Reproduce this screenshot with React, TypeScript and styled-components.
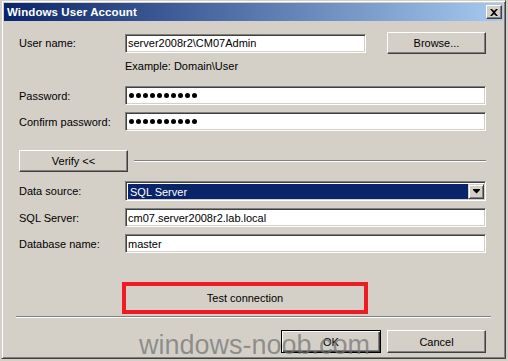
import React from 'react';
import styled, { createGlobalStyle } from 'styled-components';

const Global = createGlobalStyle`
  html, body { margin: 0; padding: 0; background: #d4d0c8; }
  body {
    width: 508px; height: 361px; overflow: hidden;
    font-family: "Liberation Sans", Arial, sans-serif;
    font-size: 11px; color: #000;
  }
`;

const Backdrop = styled.div`
  width: 508px; height: 361px; box-sizing: border-box;
  padding-left: 1px; background: #d4d0c8;
`;

const Window = styled.div`
  position: relative;
  width: 505px; height: 359px; box-sizing: border-box;
  border: 1px solid; border-color: #d4d0c8 #404040 #404040 #d4d0c8;
  box-shadow: inset 1px 1px #fff, inset -1px -1px #808080;
  padding: 2px;
  background: #d4d0c8;
  display: flex; flex-direction: column;
`;

const TitleBar = styled.div`
  height: 18px; flex: none;
  display: flex; align-items: center; justify-content: space-between;
  padding: 0 1px 0 3px;
  background: linear-gradient(to right, #0a246a, #a6caf0);
`;

const Title = styled.span`
  color: #fff; font-weight: bold; font-size: 11.5px; letter-spacing: 0.1px;
`;

const CloseButton = styled.div`
  width: 16px; height: 14px; box-sizing: border-box;
  background: #d4d0c8;
  border: 1px solid; border-color: #fff #404040 #404040 #fff;
  box-shadow: inset -1px -1px #808080;
  display: flex; align-items: center; justify-content: center;
`;

const Body = styled.div`
  flex: 1;
  display: flex; flex-direction: column;
  padding: 11px 17px 0 15px;
`;

const Row = styled.div<{ $h: number; $mt: number }>`
  display: flex; align-items: center;
  height: ${p => p.$h}px; margin-top: ${p => p.$mt}px; flex: none;
`;

const Label = styled.span`
  width: 106px; flex: none; white-space: nowrap;
`;

const TextBox = styled.div<{ $w?: number }>`
  box-sizing: border-box;
  width: ${p => (p.$w ? `${p.$w}px` : 'auto')};
  flex: ${p => (p.$w ? 'none' : '1')};
  height: 19px;
  border: 1px solid; border-color: #808080 #fff #fff #808080;
  box-shadow: inset 1px 1px #404040, inset -1px -1px #d4d0c8;
  background: #fff;
  padding-left: 2px;
  display: flex; align-items: center;
  white-space: nowrap; overflow: hidden;
`;

const Dots = styled.div`
  display: flex; gap: 2px; padding-left: 1px;
`;

const Dot = styled.span`
  width: 5px; height: 5px; border-radius: 50%; background: #000;
`;

const Button = styled.div<{ $w: number; $h: number; $default?: boolean }>`
  box-sizing: border-box; flex: none;
  width: ${p => p.$w}px; height: ${p => p.$h}px;
  background: #d4d0c8;
  border: 1px solid;
  border-color: ${p => (p.$default ? '#000' : '#fff #404040 #404040 #fff')};
  box-shadow: ${p =>
    p.$default
      ? 'inset 1px 1px #fff, inset -1px -1px #404040, inset -2px -2px #808080'
      : 'inset -1px -1px #808080'};
  display: flex; align-items: center; justify-content: center;
  white-space: nowrap;
`;

const Hint = styled.span`
  margin-left: 106px;
`;

const Etched = styled.div`
  flex: 1; height: 0;
  border-top: 1px solid #808080; border-bottom: 1px solid #fff;
`;

const VerifyLine = styled(Etched)`
  margin-left: 6px;
`;

const Combo = styled.div`
  box-sizing: border-box; flex: 1; height: 20px;
  border: 1px solid; border-color: #808080 #fff #fff #808080;
  box-shadow: inset 1px 1px #404040, inset -1px -1px #d4d0c8;
  background: #fff;
  padding: 2px 1px 1px 2px;
  display: flex;
`;

const Selected = styled.div`
  flex: 1; background: #0a246a; color: #fff;
  display: flex; align-items: center; padding-left: 2px;
`;

const DropButton = styled.div`
  width: 16px; box-sizing: border-box;
  background: #d4d0c8;
  border: 1px solid; border-color: #d4d0c8 #404040 #404040 #d4d0c8;
  box-shadow: inset 1px 1px #fff, inset -1px -1px #808080;
  display: flex; align-items: center; justify-content: center;
`;

const TestButton = styled.div`
  box-sizing: border-box;
  width: 246px; height: 32px; margin: 29px 0 0 103px; flex: none;
  border: 4px solid #ed1c24;
  background: #d4d0c8;
  display: flex; align-items: center; justify-content: center;
`;

const Separator = styled(Etched)`
  flex: none; margin: 2px -5px 0 -3px;
`;

const ButtonRow = styled.div`
  display: flex; justify-content: flex-end; gap: 6px;
  margin-top: 12px;
`;

const Watermark = styled.div`
  position: absolute; left: 137px; top: 331px;
  font-size: 27px; line-height: 27px;
  color: rgba(115, 115, 115, 0.72);
  pointer-events: none; white-space: nowrap;
`;

export default function App() {
  return (
    <>
      <Global />
      <Backdrop>
        <Window>
          <TitleBar>
            <Title>Windows User Account</Title>
            <CloseButton>
              <svg width="8" height="7" viewBox="0 0 8 7">
                <path d="M0 0h2l2 2 2-2h2L5 3.5 8 7H6L4 5 2 7H0l3-3.5z" fill="#000" />
              </svg>
            </CloseButton>
          </TitleBar>
          <Body>
            <Row $h={22} $mt={0}>
              <Label>User name:</Label>
              <TextBox $w={241}>server2008r2\CM07Admin</TextBox>
              <Button $w={99} $h={22} style={{ marginLeft: 21 }}>Browse...</Button>
            </Row>
            <Row $h={14} $mt={5}>
              <Hint>Example: Domain\User</Hint>
            </Row>
            <Row $h={19} $mt={13}>
              <Label>Password:</Label>
              <TextBox>
                <Dots aria-label="password">
                  {Array.from({ length: 10 }).map((_, i) => <Dot key={i} />)}
                </Dots>
              </TextBox>
            </Row>
            <Row $h={19} $mt={7}>
              <Label>Confirm password:</Label>
              <TextBox>
                <Dots aria-label="confirm password">
                  {Array.from({ length: 10 }).map((_, i) => <Dot key={i} />)}
                </Dots>
              </TextBox>
            </Row>
            <Row $h={22} $mt={19}>
              <Button $w={109} $h={22}>Verify &lt;&lt;</Button>
              <VerifyLine />
            </Row>
            <Row $h={20} $mt={9}>
              <Label>Data source:</Label>
              <Combo>
                <Selected>SQL Server</Selected>
                <DropButton>
                  <svg width="7" height="5" viewBox="0 0 7 5">
                    <path d="M0 0h7v1L3.5 4.5 0 1z" fill="#000" />
                  </svg>
                </DropButton>
              </Combo>
            </Row>
            <Row $h={19} $mt={7}>
              <Label>SQL Server:</Label>
              <TextBox>cm07.server2008r2.lab.local</TextBox>
            </Row>
            <Row $h={19} $mt={7}>
              <Label>Database name:</Label>
              <TextBox>master</TextBox>
            </Row>
            <TestButton>Test connection</TestButton>
            <Separator />
            <ButtonRow>
              <Button $w={100} $h={23} $default>OK</Button>
              <Button $w={99} $h={23}>Cancel</Button>
            </ButtonRow>
          </Body>
          <Watermark>windows-noob.com</Watermark>
        </Window>
      </Backdrop>
    </>
  );
}
